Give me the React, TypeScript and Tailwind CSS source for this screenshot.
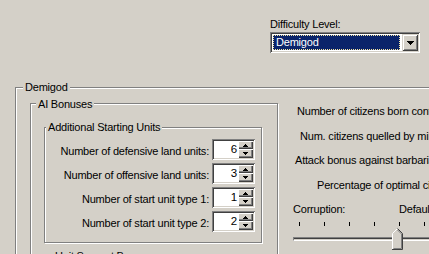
import type { ReactNode } from 'react';

const SUNKEN =
  'shadow-[inset_1px_1px_0_#808080,inset_-1px_-1px_0_#ffffff,inset_2px_2px_0_#404040,inset_-2px_-2px_0_#d4d0c8]';
const RAISED =
  'shadow-[inset_1px_1px_0_#d4d0c8,inset_-1px_-1px_0_#404040,inset_2px_2px_0_#ffffff,inset_-2px_-2px_0_#808080]';
const RAISED_SMALL = 'shadow-[inset_1px_1px_0_#ffffff,inset_-1px_-1px_0_#404040,inset_-2px_-2px_0_#808080]';

// etched frame of a classic group box
const GroupBox = ({
  label,
  labelClass,
  className,
  children,
}: {
  label: string;
  labelClass: string;
  className: string;
  children?: ReactNode;
}) => (
  <div className={`relative border border-[#808080] shadow-[inset_1px_1px_0_#ffffff,1px_1px_0_#ffffff] ${className}`}>
    <span className={`absolute bg-[#d4d0c8] px-[2px] whitespace-nowrap ${labelClass}`}>{label}</span>
    {children}
  </div>
);

const Arrow = ({ up }: { up?: boolean }) => (
  <svg width="5" height="3" viewBox="0 0 5 3" className="block">
    <path d={up ? 'M2 0h1v1h1v1h1v1H0V2h1V1h1z' : 'M0 0h5v1H4v1H3v1H2V2H1V1H0z'} fill="#000" />
  </svg>
);

const SpinBox = ({ value }: { value: number }) => (
  <div className={`flex h-[21px] w-[43px] bg-white p-[2px] ${SUNKEN}`}>
    <div className="flex flex-1 items-center justify-end pr-[1px] text-[11.5px]">{value}</div>
    <div className="flex w-[15px] flex-col">
      <div className={`flex h-[8px] items-center justify-center bg-[#d4d0c8] ${RAISED_SMALL}`}>
        <Arrow up />
      </div>
      <div className={`flex h-[9px] items-center justify-center bg-[#d4d0c8] ${RAISED_SMALL}`}>
        <Arrow />
      </div>
    </div>
  </div>
);

const units = [
  { label: 'Number of defensive land units:', value: 6 },
  { label: 'Number of offensive land units:', value: 3 },
  { label: 'Number of start unit type 1:', value: 1 },
  { label: 'Number of start unit type 2:', value: 2 },
];

const App = () => {
  return (
    <div className="h-[254px] w-[429px] overflow-hidden bg-[#d4d0c8] font-['Liberation_Sans',Arial,sans-serif] text-[11px] leading-[13px] tracking-[-0.2px] text-black">
      {/* Difficulty selector */}
      <div className="h-[87px] pl-[270px] pt-[18px]">
        <div>Difficulty Level:</div>
        <div className={`mt-[1px] flex h-[21px] w-[150px] bg-white p-[2px] ${SUNKEN}`}>
          <div className="flex-1 p-[1px] pr-[2px]">
            <div className="h-full border border-dotted border-[#f5e6a0] bg-[#0a246a] pl-[2px] leading-[13px] text-white">
              Demigod
            </div>
          </div>
          <div className={`flex w-[16px] items-center justify-center bg-[#d4d0c8] ${RAISED}`}>
            <svg width="7" height="4" viewBox="0 0 7 4" className="block">
              <path d="M0 0h7v1H6v1H5v1H4v1H3V3H2V2H1V1H0z" fill="#000" />
            </svg>
          </div>
        </div>
      </div>

      {/* Demigod group */}
      <GroupBox label="Demigod" labelClass="left-[7px] top-[-7px]" className="ml-[15px] h-[200px] w-[520px]">
        <div className="flex pl-[14px] pt-[15px]">
          <GroupBox label="AI Bonuses" labelClass="left-[5px] top-[-6px]" className="h-[200px] w-[248px] shrink-0">
            <div className="pl-[13px] pt-[23px]">
              <GroupBox label="Additional Starting Units" labelClass="left-[1px] top-[-7px]" className="h-[116px] w-[218px]">
                <div className="flex flex-col gap-[3px] pr-[6px] pt-[11px]">
                  {units.map((u) => (
                    <div key={u.label} className="flex items-end justify-end gap-[3px]">
                      <span className="mb-[2px] whitespace-nowrap">{u.label}</span>
                      <SpinBox value={u.value} />
                    </div>
                  ))}
                </div>
              </GroupBox>
              <div className="ml-[11px] mt-[7px] whitespace-nowrap">Unit Support Bonuses</div>
            </div>
          </GroupBox>

          {/* right column */}
          <div className="flex flex-1 flex-col whitespace-nowrap pt-[2px]">
            <div className="ml-[19px]">Number of citizens born content</div>
            <div className="ml-[22px] mt-[12px]">Num. citizens quelled by military</div>
            <div className="ml-[17px] mt-[11px]">Attack bonus against barbarians</div>
            <div className="ml-[39px] mt-[12px]">Percentage of optimal cities</div>
            <div className="ml-[15px] mt-[11px] flex">
              <span className="w-[106px]">Corruption:</span>
              <span>Default</span>
            </div>
            <div className="relative ml-[15px] mt-[6px] h-[28px]">
              <div className="flex gap-[24px] pl-[6px]">
                {[0, 1, 2, 3, 4, 5].map((i) => (
                  <div key={i} className="h-[4px] w-[1px] bg-black" />
                ))}
              </div>
              <div className="mt-[11px] h-[4px] w-[300px] border-b border-r border-b-white border-r-white border-l border-t border-l-[#808080] border-t-[#808080] bg-[#404040] shadow-[inset_0_-1px_0_#d4d0c8]" />
              <svg width="11" height="22" viewBox="0 0 11 22" className="absolute left-[99px] top-[6px]">
                <path d="M0.5 21.5V5.5L5.5 0.5L10.5 5.5V21.5Z" fill="#d4d0c8" />
                <path d="M0.5 21V5.5L5.5 0.5" stroke="#fff" fill="none" />
                <path d="M5.5 0.5L10.5 5.5V21.5H0" stroke="#404040" fill="none" />
                <path d="M5.5 2L9.5 6V20.5H1.5" stroke="#808080" fill="none" />
              </svg>
            </div>
          </div>
        </div>
      </GroupBox>
    </div>
  );
};

export default App;
